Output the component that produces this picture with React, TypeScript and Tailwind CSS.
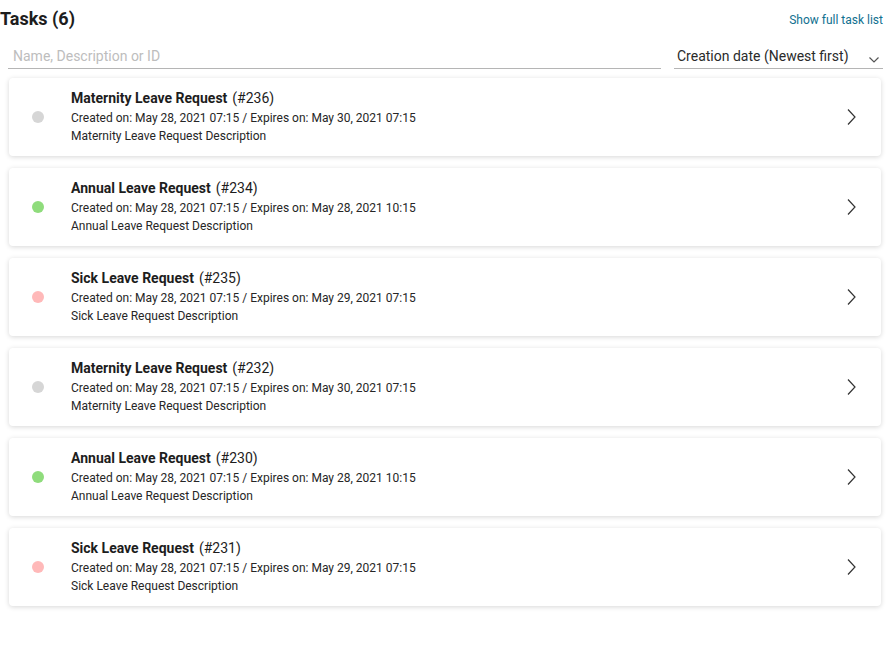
import React from "react";

type Task = { title: string; id: number; expires: string; desc: string; color: string };

const tasks: Task[] = [
  { title: "Maternity Leave Request", id: 236, expires: "May 30, 2021 07:15", desc: "Maternity Leave Request Description", color: "bg-[#d6d6d6]" },
  { title: "Annual Leave Request", id: 234, expires: "May 28, 2021 10:15", desc: "Annual Leave Request Description", color: "bg-[#8fdc7c]" },
  { title: "Sick Leave Request", id: 235, expires: "May 29, 2021 07:15", desc: "Sick Leave Request Description", color: "bg-[#ffb9b9]" },
  { title: "Maternity Leave Request", id: 232, expires: "May 30, 2021 07:15", desc: "Maternity Leave Request Description", color: "bg-[#d6d6d6]" },
  { title: "Annual Leave Request", id: 230, expires: "May 28, 2021 10:15", desc: "Annual Leave Request Description", color: "bg-[#8fdc7c]" },
  { title: "Sick Leave Request", id: 231, expires: "May 29, 2021 07:15", desc: "Sick Leave Request Description", color: "bg-[#ffb9b9]" },
];

export default function App() {
  return (
    <div className="w-[890px] h-[650px] bg-white text-[#212121] font-['Roboto',sans-serif] overflow-hidden">
      <div className="flex items-start justify-between h-[40px] pr-[7px]">
        <h1 className="text-[18px] font-bold leading-[22px] mt-[8px] ml-0 text-[#1d1d1d]">Tasks (6)</h1>
        <a className="text-[12px] leading-[14px] mt-[13px] text-[#11708f] cursor-pointer">Show full task list</a>
      </div>
      <div className="flex items-end px-[7px] gap-[13px] h-[29px]">
        <div className="flex-1 border-b border-[#b5b5b5] h-[29px] flex items-end pb-[4px] ml-[1px]">
          <input
            className="w-full outline-none text-[14px] leading-[16px] pl-[5px] placeholder:text-[#bdbdbd] bg-transparent"
            placeholder="Name, Description or ID"
          />
        </div>
        <div className="w-[209px] border-b border-[#b5b5b5] h-[29px] flex items-end justify-between pb-[4px] pl-[3px] pr-[3px]">
          <span className="text-[14px] leading-[16px] text-[#2a2a2a]">Creation date (Newest first)</span>
          <svg width="12" height="8" viewBox="0 0 12 8" className="mb-[0px]">
            <path d="M1.5 1.5 L6 6 L10.5 1.5" fill="none" stroke="#555" strokeWidth="1.2" />
          </svg>
        </div>
      </div>
      <div className="flex flex-col gap-[12px] pl-[9px] pr-[9px] mt-[9px]">
        {tasks.map((t) => (
          <div
            key={t.id}
            className="h-[78px] bg-white rounded-[4px] shadow-[0_1px_5px_rgba(0,0,0,0.16)] flex items-center"
          >
            <div className="w-[62px] flex justify-start pl-[23px]">
              <span className={`w-[12px] h-[12px] rounded-full ${t.color}`} />
            </div>
            <div className="flex-1 flex flex-col">
              <div className="text-[14px] leading-[18px] text-[#1d1d1d]">
                <span className="font-bold">{t.title}</span>
                <span className="ml-[5px]">(#{t.id})</span>
              </div>
              <div className="text-[12px] leading-[18px] mt-[2px] text-[#262626]">
                Created on: May 28, 2021 07:15 / Expires on: {t.expires}
              </div>
              <div className="text-[12px] leading-[18px] text-[#262626]">{t.desc}</div>
            </div>
            <div className="w-[36px] flex justify-start">
              <svg width="12" height="18" viewBox="0 0 12 18">
                <path d="M3 1.5 L10 9 L3 16.5" fill="none" stroke="#333" strokeWidth="1.2" />
              </svg>
            </div>
          </div>
        ))}
      </div>
    </div>
  );
}
